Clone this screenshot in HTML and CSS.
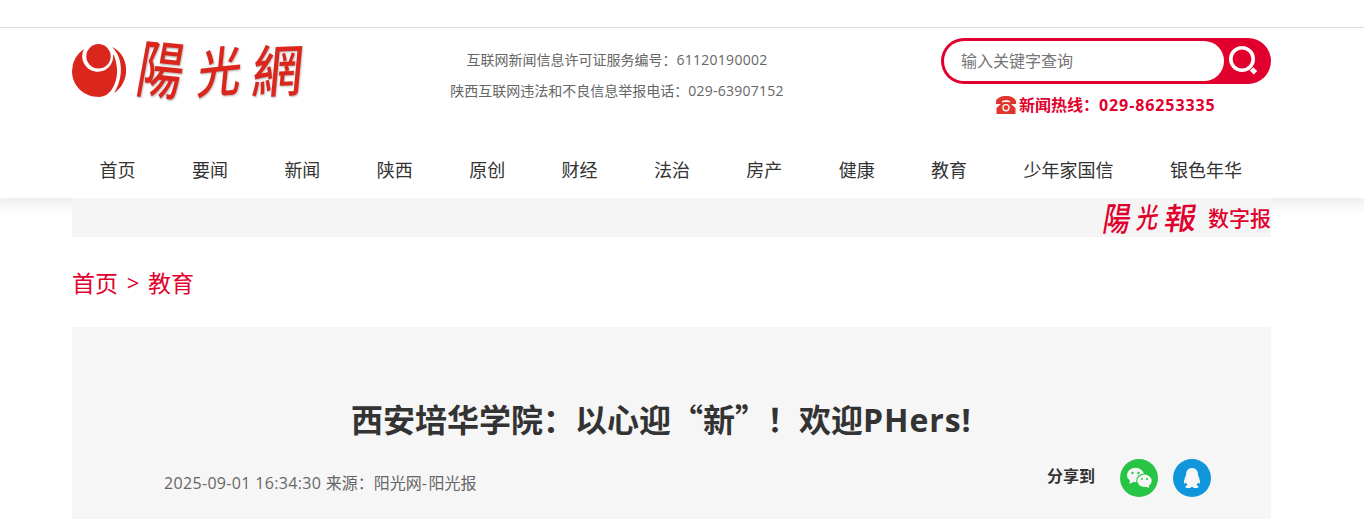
FILE: index.html
```
<!DOCTYPE html>
<html lang="zh-CN">
<head>
<meta charset="utf-8">
<title>西安培华学院：以心迎“新”！欢迎PHers!</title>
<link rel="stylesheet" href="styles.css">
</head>
<body>
<header class="site-header">
  <div class="wrap masthead">
    <a class="logo">
      <svg class="logo-mark" viewBox="0 0 54 54">
        <path d="M12 5A27 27 0 0 0 0 27C0 42 12 53 27 53C39 53 46 38 45 24C44 17 43 13 41 10A15.500 15.500 0 1 1 12 5Z" fill="#db261d"/>
        <circle cx="26.500" cy="12.300" r="12.200" fill="#db261d"/>
        <path d="M40 3C58 11 59 38 42 49C51 35 52 14 40 3Z" fill="#db261d"/>
      </svg>
      <span class="logo-text"><i class="c1">陽</i><i class="c2">光</i><i class="c3">網</i></span>
    </a>
    <div class="license">
      <p>互联网新闻信息许可证服务编号：<span class="num">61120190002</span></p>
      <p>陕西互联网违法和不良信息举报电话：<span class="num">029-63907152</span></p>
    </div>
    <div class="search-area">
      <div class="search">
        <div class="search-input">输入关键字查询</div>
        <svg class="search-icon" viewBox="0 0 30 30"><circle cx="14" cy="13" r="11.200" fill="none" stroke="#fff" stroke-width="3.600"/><path d="M23.500 23L27.500 26.800" stroke="#fff" stroke-width="5"/></svg>
      </div>
      <div class="hotline">
        <svg class="phone" viewBox="0 0 20 18"><path d="M0 8V5C1 2 5 0 10 0S19 2 20 5V8H14V5C12 4 8 4 6 5V8Z" fill="#e0342c"/><path fill-rule="evenodd" d="M7 6H13L19.500 12V18H.5V12ZM10 8A3.700 3.700 0 1 0 10 15.400A3.700 3.700 0 1 0 10 8Z" fill="#e0342c"/><circle cx="10" cy="11.700" r="2.400" fill="#e0342c"/></svg>
        <span>新闻热线：<span class="num">029-86253335</span></span>
      </div>
    </div>
  </div>
  <nav class="wrap nav">
    <a>首页</a><a>要闻</a><a>新闻</a><a>陕西</a><a>原创</a><a>财经</a><a>法治</a><a>房产</a><a>健康</a><a>教育</a><a>少年家国信</a><a>银色年华</a>
  </nav>
</header>
<div class="wrap paper-bar">
  <span class="paper-logo"><i class="p1">陽</i><i class="p2">光</i><i class="p3">報</i></span>
  <span class="paper-label">数字报</span>
</div>
<div class="wrap crumbs"><a>首页</a><span class="sep">&gt;</span><a>教育</a></div>
<main class="wrap article">
  <h1>西安培华学院：以心迎“新”！欢迎<span class="latin">PHers!</span></h1>
  <div class="meta">
    <div class="source"><span class="latin">2025-09-01 16:34:30 </span>来源：阳光网<span class="latin dash">-</span>阳光报</div>
    <div class="share">
      <span class="share-label">分享到</span>
      <svg class="share-icon" viewBox="0 0 38 38"><circle cx="19" cy="19" r="19" fill="#28c445"/><ellipse cx="15.500" cy="16" rx="8.600" ry="7.200" fill="#f6f6f6"/><path d="M10 20L9.500 25L15 22Z" fill="#f6f6f6"/><ellipse cx="24.300" cy="21.500" rx="8" ry="7" fill="#28c445"/><ellipse cx="24.500" cy="21.800" rx="7.200" ry="6.200" fill="#f6f6f6"/><path d="M24 27L29 29L28.500 25Z" fill="#f6f6f6"/><g fill="#28c445"><circle cx="12.500" cy="14" r="1.200"/><circle cx="18.500" cy="14" r="1.200"/><circle cx="22" cy="20" r="1"/><circle cx="27" cy="20" r="1"/></g></svg>
      <svg class="share-icon" viewBox="0 0 38 38"><circle cx="19" cy="19" r="19" fill="#1296db"/><path d="M19 9C15 9 13 12 13 16C12.500 18 11 20 11 23C11 25 12 25 13 23.500C13.300 24.600 14 25.500 14.600 26C11.500 27 11.800 29 15 29C17 29 18 28.500 19 27.700C20 28.500 21 29 23 29C26.200 29 26.500 27 23.400 26C24 25.500 24.700 24.600 25 23.500C26 25 27 25 27 23C27 20 25.500 18 25 16C25 12 23 9 19 9Z" fill="#f6f6f6"/></svg>
    </div>
  </div>
</main>
</body>
</html>
```
FILE: styles.css
```
* { box-sizing: border-box; }
body {
  margin: 0;
  height: 519px;
  overflow: hidden;
  background: #fff;
  color: #333;
  font-family: "Noto Sans CJK SC", sans-serif;
}
p, h1 { margin: 0; }
i { font-style: normal; }
.wrap { width: 1199px; margin-left: 72px; }
.num, .latin { font-family: "Open Sans", "Noto Sans", sans-serif; }

.site-header {
  margin-top: 27px;
  height: 171px;
  border-top: 1px solid #ddd;
  box-shadow: 0 0 14px 7px rgba(0, 0, 0, .08);
  clip-path: inset(0 0 -24px 0);
}
.masthead { display: flex; height: 115px; }
.logo { display: flex; width: 366px; padding-top: 16px; }
.logo-mark { width: 54px; height: 54px; }
.logo-text {
  display: flex;
  width: 180px;
  height: 64px;
  margin: -6px 0 0 8px;
  color: #db261d;
  line-height: 64px;
  text-shadow: 1px 1px 2px rgba(0, 0, 0, .3);
}
.logo-text i { font-weight: 500; }
.c1 { width: 60px; font-size: 52px; transform: translate(1px, -3px) scale(.88, 1.2) skewX(-10deg) rotate(4deg); }
.c2 { width: 53px; font-size: 46px; transform: translate(3px, -2px) scale(.94, 1.18) skewX(-12deg) rotate(-5deg); }
.c3 { width: 54px; font-size: 52px; transform: translate(5px, -2px) scale(.96, 1.08) skewX(-8deg) rotate(-2deg); }
.license {
  width: 358px;
  padding-top: 16px;
  color: #666;
  font-size: 14px;
  line-height: 31px;
  text-align: center;
}
.license .num { letter-spacing: .25px; }
.search-area { width: 330px; margin-left: 145px; padding-top: 10px; }
.search {
  display: flex;
  align-items: center;
  height: 46px;
  padding: 3px;
  border-radius: 23px;
  background: #e1002d;
}
.search-input {
  width: 280px;
  height: 40px;
  padding-left: 17px;
  border-radius: 20px;
  background: #fff;
  color: #757575;
  font-size: 16px;
  line-height: 39px;
}
.search-icon { width: 30px; height: 30px; margin: -1px 0 0 4px; }
.hotline {
  display: flex;
  align-items: center;
  height: 24px;
  margin: 8px 0 0 55px;
  color: #e1002d;
  font-size: 16px;
  font-weight: 700;
  line-height: 24px;
  white-space: nowrap;
}
.hotline .num { letter-spacing: .9px; }
.phone { width: 20px; height: 18px; margin: 2px 3px 0 0; }
.nav {
  display: flex;
  gap: 56.4px;
  padding-left: 27.6px;
  font-size: 18px;
  line-height: 53px;
  white-space: nowrap;
}
.paper-bar {
  position: relative;
  display: flex;
  justify-content: flex-end;
  height: 39px;
  background: #f5f5f5;
  color: #e1002d;
}
.paper-logo { display: flex; width: 98px; margin-right: 8px; line-height: 39px; }
.paper-logo i { font-weight: 500; }
.p1 { width: 33px; font-size: 31px; transform: translateY(-1px) scale(.88, 1.08) skewX(-12deg); }
.p2 { width: 29px; font-size: 24px; transform: translate(1px, -2px) scale(.9, 1.16) skewX(-14deg) rotate(-4deg); }
.p3 { width: 34px; font-size: 32px; transform: translate(1px, -1px) skewX(-10deg) rotate(-2deg) scaleY(.96); }
.paper-label { font-size: 21px; font-weight: 500; line-height: 38px; }
.crumbs {
  display: flex;
  height: 90px;
  color: #e1002d;
  font-size: 23px;
  line-height: 90px;
}
.sep { width: 30px; text-align: center; font-family: "Open Sans", sans-serif; font-size: 22px; }
.article { height: 192px; padding-top: 67px; background: #f6f6f6; }
h1 {
  height: 48px;
  padding-left: 279px;
  font-size: 32px;
  font-weight: 700;
  line-height: 48px;
  white-space: nowrap;
}
h1 .latin { letter-spacing: .9px; }
.meta {
  display: flex;
  justify-content: space-between;
  padding: 17px 60px 0 92px;
}
.source { padding-top: 11px; color: #666; font-size: 16px; line-height: 24px; }
.source .latin { letter-spacing: .33px; }
.source .dash { letter-spacing: 1.5px; }
.share { display: flex; gap: 15px; }
.share-label { width: 58px; font-size: 16px; font-weight: 700; line-height: 33px; }
.share-icon { width: 38px; height: 38px; }
```
